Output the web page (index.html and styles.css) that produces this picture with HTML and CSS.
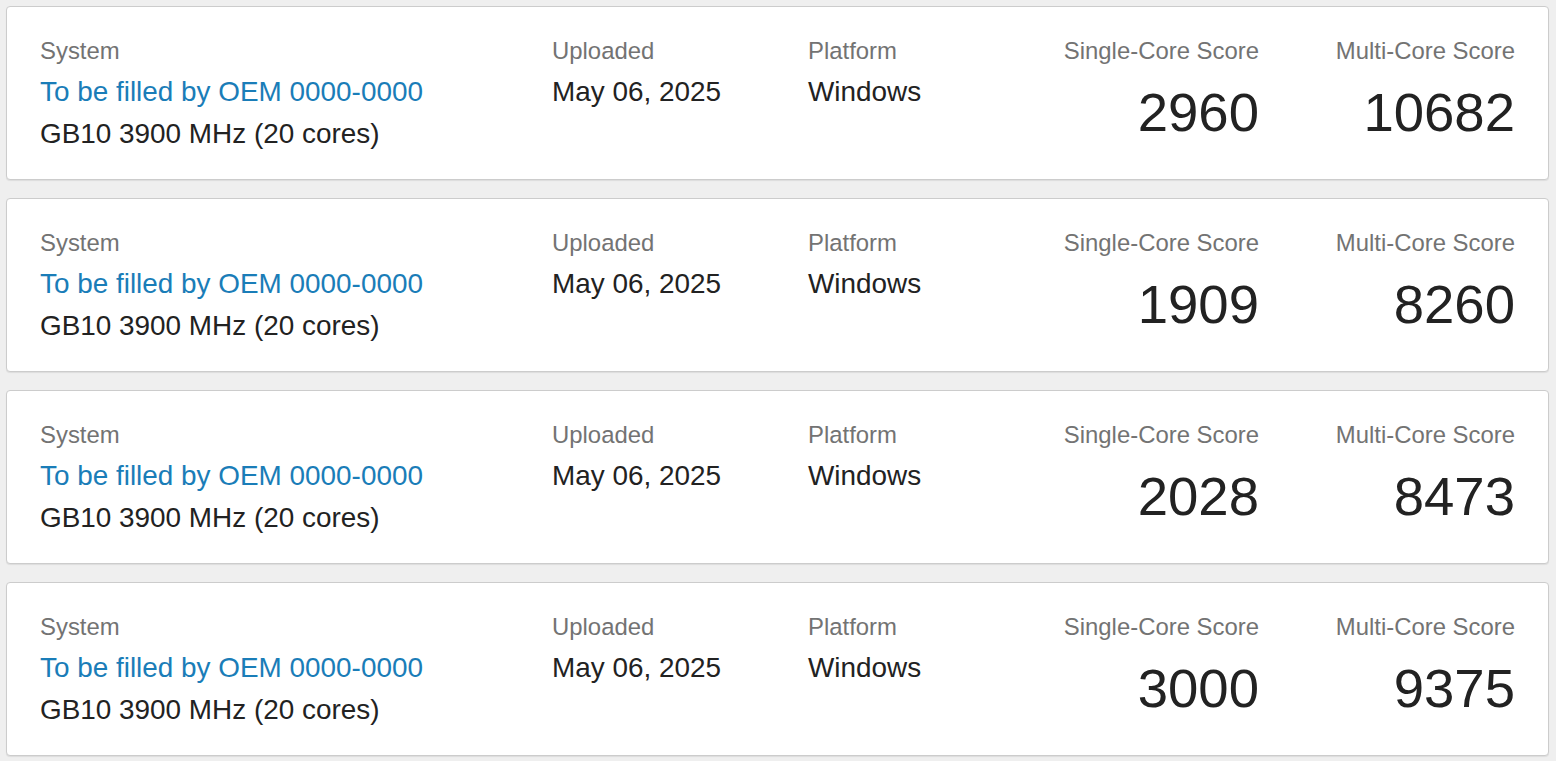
FILE: index.html
```html
<!DOCTYPE html>
<html>
<head>
<meta charset="utf-8">
<link rel="stylesheet" href="styles.css">
</head>
<body>
<div class="list">
  <div class="card">
    <div class="col sys">
      <div class="label">System</div>
      <a class="link" href="#">To be filled by OEM 0000-0000</a>
      <div class="value">GB10 3900 MHz (20 cores)</div>
    </div>
    <div class="col">
      <div class="label">Uploaded</div>
      <div class="value">May 06, 2025</div>
    </div>
    <div class="col">
      <div class="label">Platform</div>
      <div class="value">Windows</div>
    </div>
    <div class="col score">
      <div class="label">Single-Core Score</div>
      <div class="num">2960</div>
    </div>
    <div class="col score">
      <div class="label">Multi-Core Score</div>
      <div class="num">10682</div>
    </div>
  </div>
  <div class="card">
    <div class="col sys">
      <div class="label">System</div>
      <a class="link" href="#">To be filled by OEM 0000-0000</a>
      <div class="value">GB10 3900 MHz (20 cores)</div>
    </div>
    <div class="col">
      <div class="label">Uploaded</div>
      <div class="value">May 06, 2025</div>
    </div>
    <div class="col">
      <div class="label">Platform</div>
      <div class="value">Windows</div>
    </div>
    <div class="col score">
      <div class="label">Single-Core Score</div>
      <div class="num">1909</div>
    </div>
    <div class="col score">
      <div class="label">Multi-Core Score</div>
      <div class="num">8260</div>
    </div>
  </div>
  <div class="card">
    <div class="col sys">
      <div class="label">System</div>
      <a class="link" href="#">To be filled by OEM 0000-0000</a>
      <div class="value">GB10 3900 MHz (20 cores)</div>
    </div>
    <div class="col">
      <div class="label">Uploaded</div>
      <div class="value">May 06, 2025</div>
    </div>
    <div class="col">
      <div class="label">Platform</div>
      <div class="value">Windows</div>
    </div>
    <div class="col score">
      <div class="label">Single-Core Score</div>
      <div class="num">2028</div>
    </div>
    <div class="col score">
      <div class="label">Multi-Core Score</div>
      <div class="num">8473</div>
    </div>
  </div>
  <div class="card">
    <div class="col sys">
      <div class="label">System</div>
      <a class="link" href="#">To be filled by OEM 0000-0000</a>
      <div class="value">GB10 3900 MHz (20 cores)</div>
    </div>
    <div class="col">
      <div class="label">Uploaded</div>
      <div class="value">May 06, 2025</div>
    </div>
    <div class="col">
      <div class="label">Platform</div>
      <div class="value">Windows</div>
    </div>
    <div class="col score">
      <div class="label">Single-Core Score</div>
      <div class="num">3000</div>
    </div>
    <div class="col score">
      <div class="label">Multi-Core Score</div>
      <div class="num">9375</div>
    </div>
  </div>
</div>
</body>
</html>
```

FILE: styles.css
```css
html, body {
  margin: 0;
  padding: 0;
  background: #efefef;
}
body {
  font-family: "Liberation Sans", Arial, sans-serif;
  color: #222;
  padding: 6px 7px 6px 6px;
}
.list {
  display: flex;
  flex-direction: column;
  gap: 18px;
}
.card {
  background: #fff;
  border: 1px solid #cccccc;
  border-radius: 4px;
  box-shadow: 0 1px 1px rgba(0,0,0,0.08);
  padding: 26px 33px 24px 33px;
  display: grid;
  grid-template-columns: 512px 256px 256px 195px 256px;
}
.col {
  display: flex;
  flex-direction: column;
  align-items: flex-start;
  white-space: nowrap;
}
.col.score {
  align-items: flex-end;
  text-align: right;
}
.label {
  font-size: 23.9px;
  line-height: 35px;
  margin-bottom: 3px;
  color: #737373;
}
.value {
  font-size: 27.9px;
  line-height: 42px;
  color: #222;
}
.link {
  font-size: 27.9px;
  line-height: 42px;
  color: #1a7db8;
  text-decoration: none;
}
.num {
  font-size: 54.5px;
  line-height: 64px;
  margin-top: 10px;
  color: #222;
}
```
